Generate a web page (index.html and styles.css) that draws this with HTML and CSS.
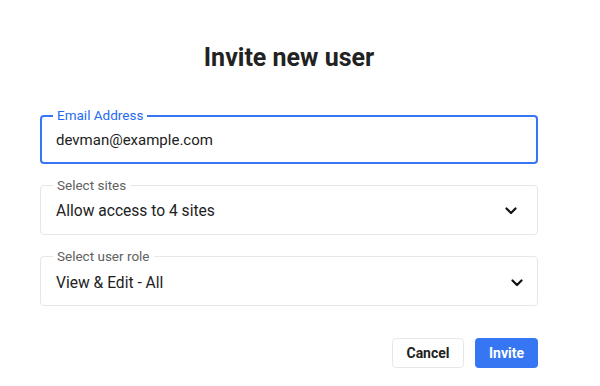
FILE: index.html
```html
<!DOCTYPE html>
<html lang="en">
<head>
    <meta charset="UTF-8">
    <meta name="viewport" content="width=device-width, initial-scale=1.0">
    <title>Invite new user</title>
    <link rel="stylesheet" href="styles.css">
</head>
<body>

<div class="dialog">
    <h2 class="dialog-title">Invite new user</h2>

    <form class="invite-form">
        <fieldset class="field field-focused">
            <legend class="field-label">Email Address</legend>
            <input type="email" class="field-input" value="devman@example.com">
        </fieldset>

        <fieldset class="field">
            <legend class="field-label">Select sites</legend>
            <div class="field-select">
                <span>Allow access to 4 sites</span>
                <svg class="chevron" width="12" height="8" viewBox="0 0 12 8">
                    <path d="M1.5 1.5 L6 6 L10.5 1.5" fill="none" stroke="#111" stroke-width="2.2" stroke-linecap="round" stroke-linejoin="round"/>
                </svg>
            </div>
        </fieldset>

        <fieldset class="field field-role">
            <legend class="field-label">Select user role</legend>
            <div class="field-select">
                <span>View &amp; Edit - All</span>
                <svg class="chevron" width="12" height="8" viewBox="0 0 12 8">
                    <path d="M1.5 1.5 L6 6 L10.5 1.5" fill="none" stroke="#111" stroke-width="2.2" stroke-linecap="round" stroke-linejoin="round"/>
                </svg>
            </div>
        </fieldset>

        <div class="actions">
            <button type="button" class="btn btn-default">Cancel</button>
            <button type="button" class="btn btn-primary">Invite</button>
        </div>
    </form>
</div>

</body>
</html>
```

FILE: styles.css
```css
:root {
    --blue: #3776f2;
    --blue-text: #1f6bf0;
    --text: #222222;
    --text-light: #616161;
    --border: #e7e7e7;
    --radius: 4px;
}

* {
    box-sizing: border-box;
    margin: 0;
    padding: 0;
}

body {
    font-family: Roboto, "Liberation Sans", Arial, sans-serif;
    background-color: #ffffff;
    color: var(--text);
}

.dialog {
    padding: 43px 62px 0 40px;
}

.dialog-title {
    text-align: center;
    font-size: 25px;
    font-weight: 700;
    line-height: 30px;
    color: #222222;
    margin-bottom: 35px;
}

.invite-form {
    display: flex;
    flex-direction: column;
    gap: 14px;
}

.field {
    border: 1px solid var(--border);
    border-radius: var(--radius);
    padding: 0 20px 0 12px;
    height: 57px;
    min-width: 0;
}

.field-role {
    padding-right: 14px;
}

.field-role .field-select {
    padding-top: 9px;
}

.field-focused {
    border: 2px solid var(--blue);
    padding-left: 11px;
    height: 56px;
}

.field-label {
    font-size: 13.5px;
    line-height: 15px;
    padding: 0 4px;
    color: var(--text-light);
}

.field-focused .field-label {
    color: var(--blue-text);
}

.field-input {
    display: block;
    width: 100%;
    border: none;
    outline: none;
    background: transparent;
    font-family: inherit;
    font-size: 15px;
    line-height: 20px;
    padding: 7px 0 0 3px;
    color: var(--text);
}

.field-select {
    display: flex;
    align-items: center;
    justify-content: space-between;
    font-size: 15.6px;
    line-height: 20px;
    padding: 8px 0 0 3px;
}

.chevron {
    display: block;
}

.actions {
    display: flex;
    justify-content: flex-end;
    gap: 11px;
    margin-top: 18px;
}

.btn {
    height: 30px;
    border-radius: var(--radius);
    font-family: inherit;
    font-size: 14px;
    font-weight: 700;
    cursor: pointer;
}

.btn-default {
    width: 72px;
    background-color: #ffffff;
    color: #222222;
    border: 1px solid var(--border);
}

.btn-primary {
    width: 63px;
    background-color: var(--blue);
    color: #ffffff;
    border: none;
}
```
